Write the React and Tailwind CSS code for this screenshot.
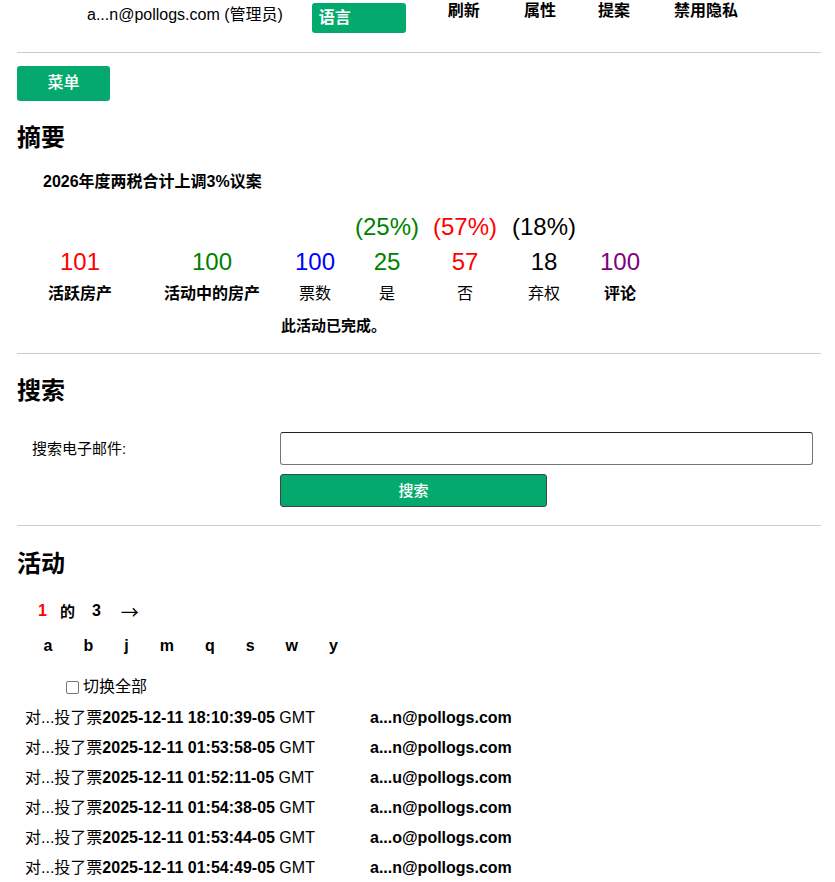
export default function App() {
  const font = { fontFamily: '"Liberation Sans", Arial, "Noto Sans CJK SC", sans-serif' };
  const rows = [
    ["2025-12-11 18:10:39-05", "a...n@pollogs.com"],
    ["2025-12-11 01:53:58-05", "a...n@pollogs.com"],
    ["2025-12-11 01:52:11-05", "a...u@pollogs.com"],
    ["2025-12-11 01:54:38-05", "a...n@pollogs.com"],
    ["2025-12-11 01:53:44-05", "a...o@pollogs.com"],
    ["2025-12-11 01:54:49-05", "a...n@pollogs.com"],
  ];
  const cols = ["w-[126px]", "w-[138px]", "w-[68px]", "w-[76px]", "w-[80px]", "w-[78px]", "w-[74px]"];
  const nums = [
    ["101", "text-[#ff0000]", "活跃房产", true],
    ["100", "text-[#008000]", "活动中的房产", true],
    ["100", "text-[#0000ff]", "票数", false],
    ["25", "text-[#008000]", "是", false],
    ["57", "text-[#ff0000]", "否", false],
    ["18", "text-black", "弃权", false],
    ["100", "text-[#800080]", "评论", true],
  ];
  return (
    <div style={font} className="w-[835px] h-[882px] overflow-hidden bg-white text-black text-[16px] leading-[1.15] relative">
      {/* top bar */}
      <div className="flex items-start h-[52px]">
        <div className="ml-[87px] mt-[6px] whitespace-nowrap">a...n@pollogs.com (管理员)</div>
        <div className="ml-[29px] mt-[3px] w-[94px] h-[30px] rounded-[3px] bg-[#04aa6d] text-white font-bold pl-[7px] pt-[6px]">语言</div>
        <div className="ml-[42px] mt-[2px] font-bold">刷新</div>
        <div className="ml-[44px] mt-[2px] font-bold">属性</div>
        <div className="ml-[42px] mt-[2px] font-bold">提案</div>
        <div className="ml-[44px] mt-[2px] font-bold">禁用隐私</div>
      </div>
      <div className="mx-[17px] h-px bg-[#cccccc] w-[804px]"></div>
      <div className="ml-[17px] mt-[13px] w-[93px] h-[35px] rounded-[3px] bg-[#04aa6d] text-white font-medium flex items-center justify-center">菜单</div>

      <div className="ml-[17px] mt-[25px] text-[24px] font-bold leading-none">摘要</div>
      <div className="ml-[43px] mt-[23px] font-bold text-[16px]">2026年度两税合计上调3%议案</div>

      {/* stats */}
      <div className="ml-[17px] mt-[21px]">
        <div className="flex text-[24px] h-[29px] items-center">
          <div className="w-[332px]"></div>
          <div className="w-[76px] text-center text-[#008000]">(25%)</div>
          <div className="w-[80px] text-center text-[#ff0000]">(57%)</div>
          <div className="w-[78px] text-center text-black">(18%)</div>
        </div>
        <div className="flex mt-[6px] h-[29px] items-center">
          {nums.map((n, i) => (
            <div key={i} className={`${cols[i]} text-center text-[24px] ${n[1]}`}>{n[0]}</div>
          ))}
        </div>
        <div className="flex mt-[7px] h-[22px] items-center">
          {nums.map((n, i) => (
            <div key={i} className={`${cols[i]} text-center text-[16px] ${n[3] ? "font-bold" : ""}`}>{n[2]}</div>
          ))}
        </div>
        <div className="ml-[264px] mt-[12px] font-bold text-[15px]">此活动已完成。</div>
      </div>

      <div className="mx-[17px] mt-[18px] h-px bg-[#cccccc] w-[804px]"></div>
      <div className="ml-[17px] mt-[25px] text-[24px] font-bold leading-none">搜索</div>
      <div className="flex mt-[29px]">
        <div className="ml-[32px] w-[248px] pt-[8px] text-[15px]">搜索电子邮件:</div>
        <div className="flex flex-col">
          <div className="w-[533px] h-[33px] border border-[#767676] border-t-[#222] rounded-[3px] bg-white"></div>
          <div className="mt-[9px] w-[267px] h-[33px] border border-[#444] rounded-[3px] bg-[#04aa6d] text-white font-medium text-[15px] flex items-center justify-center">搜索</div>
        </div>
      </div>
      <div className="mx-[17px] mt-[18px] h-px bg-[#cccccc] w-[804px]"></div>

      <div className="ml-[17px] mt-[26px] text-[24px] font-bold leading-none">活动</div>
      <div className="flex items-center mt-[26px] h-[20px] font-bold">
        <span className="ml-[38px] text-[#ff0000]">1</span>
        <span className="ml-[13px] text-[15px]">的</span>
        <span className="ml-[17px]">3</span>
        <span className="ml-[20px] font-normal text-[18px]" style={{ fontFamily: '"Noto Sans CJK SC", sans-serif' }}>→</span>
      </div>
      <div className="flex items-center mt-[15px] h-[20px] font-bold ml-[28px]">
        {["a", "b", "j", "m", "q", "s", "w", "y"].map((l) => (
          <span key={l} className="px-[15.5px]">{l}</span>
        ))}
      </div>
      <div className="flex items-center mt-[21px] ml-[66px] h-[20px]">
        <span className="w-[13px] h-[13px] border border-[#767676] rounded-[2px] bg-white"></span>
        <span className="ml-[4px]">切换全部</span>
      </div>
      <div className="mt-[6px] flex flex-col">
        {rows.map((r, i) => (
          <div key={i} className="flex h-[30px] items-center whitespace-nowrap">
            <div className="ml-[25px] w-[345px]">
              对...投了票<span className="font-bold">{r[0]}</span> GMT
            </div>
            <div className="font-bold">{r[1]}</div>
          </div>
        ))}
      </div>
    </div>
  );
}
